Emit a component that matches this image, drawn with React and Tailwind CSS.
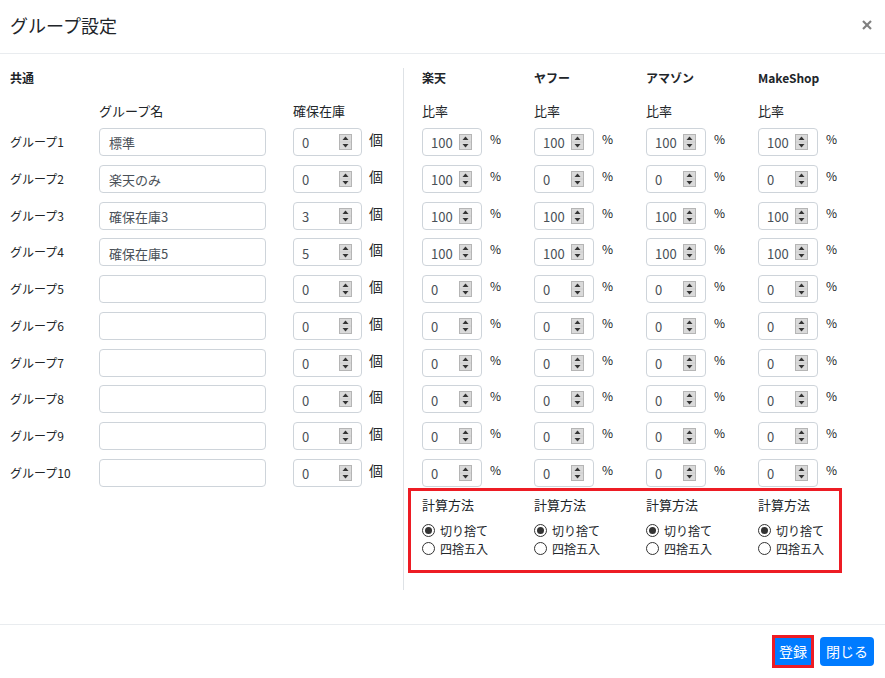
import React from "react";

const groups = [
  { label: "グループ1", name: "標準", stock: "0", rates: ["100", "100", "100", "100"] },
  { label: "グループ2", name: "楽天のみ", stock: "0", rates: ["100", "0", "0", "0"] },
  { label: "グループ3", name: "確保在庫3", stock: "3", rates: ["100", "100", "100", "100"] },
  { label: "グループ4", name: "確保在庫5", stock: "5", rates: ["100", "100", "100", "100"] },
  { label: "グループ5", name: "", stock: "0", rates: ["0", "0", "0", "0"] },
  { label: "グループ6", name: "", stock: "0", rates: ["0", "0", "0", "0"] },
  { label: "グループ7", name: "", stock: "0", rates: ["0", "0", "0", "0"] },
  { label: "グループ8", name: "", stock: "0", rates: ["0", "0", "0", "0"] },
  { label: "グループ9", name: "", stock: "0", rates: ["0", "0", "0", "0"] },
  { label: "グループ10", name: "", stock: "0", rates: ["0", "0", "0", "0"] },
];

const shops = ["楽天", "ヤフー", "アマゾン", "MakeShop"];

function Spinner() {
  return (
    <svg width="13" height="16" viewBox="0 0 13 16" className="shrink-0">
      <rect x="0.5" y="0.5" width="12" height="15" fill="#e8e8e8" stroke="#b5b5b5" />
      <line x1="0.5" y1="8" x2="12.5" y2="8" stroke="#b5b5b5" />
      <rect x="1" y="1" width="11" height="6.5" fill="#dadada" />
      <rect x="1" y="8.5" width="11" height="6.5" fill="#dadada" />
      <polygon points="6.5,2.5 9.5,6 3.5,6" fill="#333" />
      <polygon points="3.5,10 9.5,10 6.5,13.5" fill="#333" />
    </svg>
  );
}

function NumInput({ value, w }) {
  return (
    <div
      className={`${w} h-[28px] border border-[#ced4da] rounded-[4px] bg-white flex items-center pl-[8px] pr-[9px] shrink-0`}
    >
      <span className="flex-1 text-[13px] text-[#495057] pt-[2px]">{value}</span>
      <Spinner />
    </div>
  );
}

function Radio({ checked, label }) {
  return (
    <div className="flex items-center h-[18px]">
      <span className="w-[13px] h-[13px] rounded-full border border-[#333] bg-white flex items-center justify-center">
        {checked && <span className="w-[7px] h-[7px] rounded-full bg-[#333]" />}
      </span>
      <span className="ml-[5px] text-[12px] text-[#212529] leading-[18px]">{label}</span>
    </div>
  );
}

export default function App() {
  return (
    <div
      className="w-[885px] h-[678px] bg-white text-[#212529] flex flex-col overflow-hidden"
      style={{ fontFamily: '"Noto Sans CJK JP", "Noto Sans", sans-serif' }}
    >
      {/* Header */}
      <div className="h-[54px] border-b border-[#e9ecef] flex items-center justify-between pl-[10px] pr-[13px] pb-[4px] shrink-0">
        <div className="text-[18px] leading-[24px]">グループ設定</div>
        <svg width="10" height="10" viewBox="0 0 10 10">
          <line x1="1" y1="1" x2="9" y2="9" stroke="#7f7f7f" strokeWidth="2.2" />
          <line x1="9" y1="1" x2="1" y2="9" stroke="#7f7f7f" strokeWidth="2.2" />
        </svg>
      </div>

      {/* Body */}
      <div className="h-[570px] flex shrink-0">
        {/* Left */}
        <div className="w-[403px] pl-[10px] pt-[16px]">
          <div className="text-[12px] font-bold leading-[16px] h-[16px]">共通</div>
          <div className="flex mt-[15px] h-[20px] text-[13px] leading-[20px]">
            <div className="w-[89px]" />
            <div className="w-[167px]">グループ名</div>
            <div className="ml-[27px]">確保在庫</div>
          </div>
          <div className="mt-[7px] flex flex-col gap-[8.78px]">
            {groups.map((g) => (
              <div key={g.label} className="flex items-start h-[28px]">
                <div className="w-[89px] h-[28px] flex items-center text-[12px]">{g.label}</div>
                <div className="w-[167px] h-[28px] border border-[#ced4da] rounded-[4px] flex items-center pl-[9px] text-[13px] text-[#495057] pt-[2px]">
                  {g.name}
                </div>
                <div className="ml-[27px]">
                  <NumInput value={g.stock} w="w-[69px]" />
                </div>
                <span className="ml-[7px] text-[14px] leading-[20px] mt-[1px]">個</span>
              </div>
            ))}
          </div>
        </div>

        {/* Right */}
        <div className="mt-[14px] mb-[34px] border-l border-[#dee2e6] pl-[18px] pt-[2px] flex-1 flex flex-col">
          <div className="grid grid-cols-[112px_112px_112px_112px] h-[16px]">
            {shops.map((s) => (
              <div key={s} className="text-[12px] font-bold leading-[16px]">{s}</div>
            ))}
          </div>
          <div className="grid grid-cols-[112px_112px_112px_112px] mt-[15px] h-[20px]">
            {shops.map((s) => (
              <div key={s} className="text-[13px] leading-[20px]">比率</div>
            ))}
          </div>
          <div className="mt-[7px] flex flex-col gap-[8.78px]">
            {groups.map((g) => (
              <div key={g.label} className="grid grid-cols-[112px_112px_112px_112px] h-[28px]">
                {g.rates.map((r, i) => (
                  <div key={i} className="flex items-start">
                    <NumInput value={r} w="w-[60px]" />
                    <span className="ml-[8px] text-[12px] leading-[18px] mt-[2px]">%</span>
                  </div>
                ))}
              </div>
            ))}
          </div>
          <div className="mt-[1px] -ml-[14px] w-[434px] border-[3px] border-[#ed1c24] pl-[11px] pt-[4px] pb-[12px] grid grid-cols-[112px_112px_112px_1fr]">
            {shops.map((s) => (
              <div key={s} className="flex flex-col">
                <div className="text-[13px] leading-[20px]">計算方法</div>
                <div className="mt-[7px]">
                  <Radio checked label="切り捨て" />
                  <Radio label="四捨五入" />
                </div>
              </div>
            ))}
          </div>
        </div>
      </div>

      {/* Footer */}
      <div className="flex-1 border-t border-[#e9ecef] flex items-center justify-end pr-[11px] gap-[6px]">
        <div className="border-[3px] border-[#ed1c24]">
          <div className="w-[36px] h-[27px] bg-[#007bff] text-white text-[14px] flex items-center justify-center">登録</div>
        </div>
        <div className="w-[54px] h-[29px] bg-[#007bff] text-white text-[14px] rounded-[4px] flex items-center justify-center">閉じる</div>
      </div>
    </div>
  );
}
